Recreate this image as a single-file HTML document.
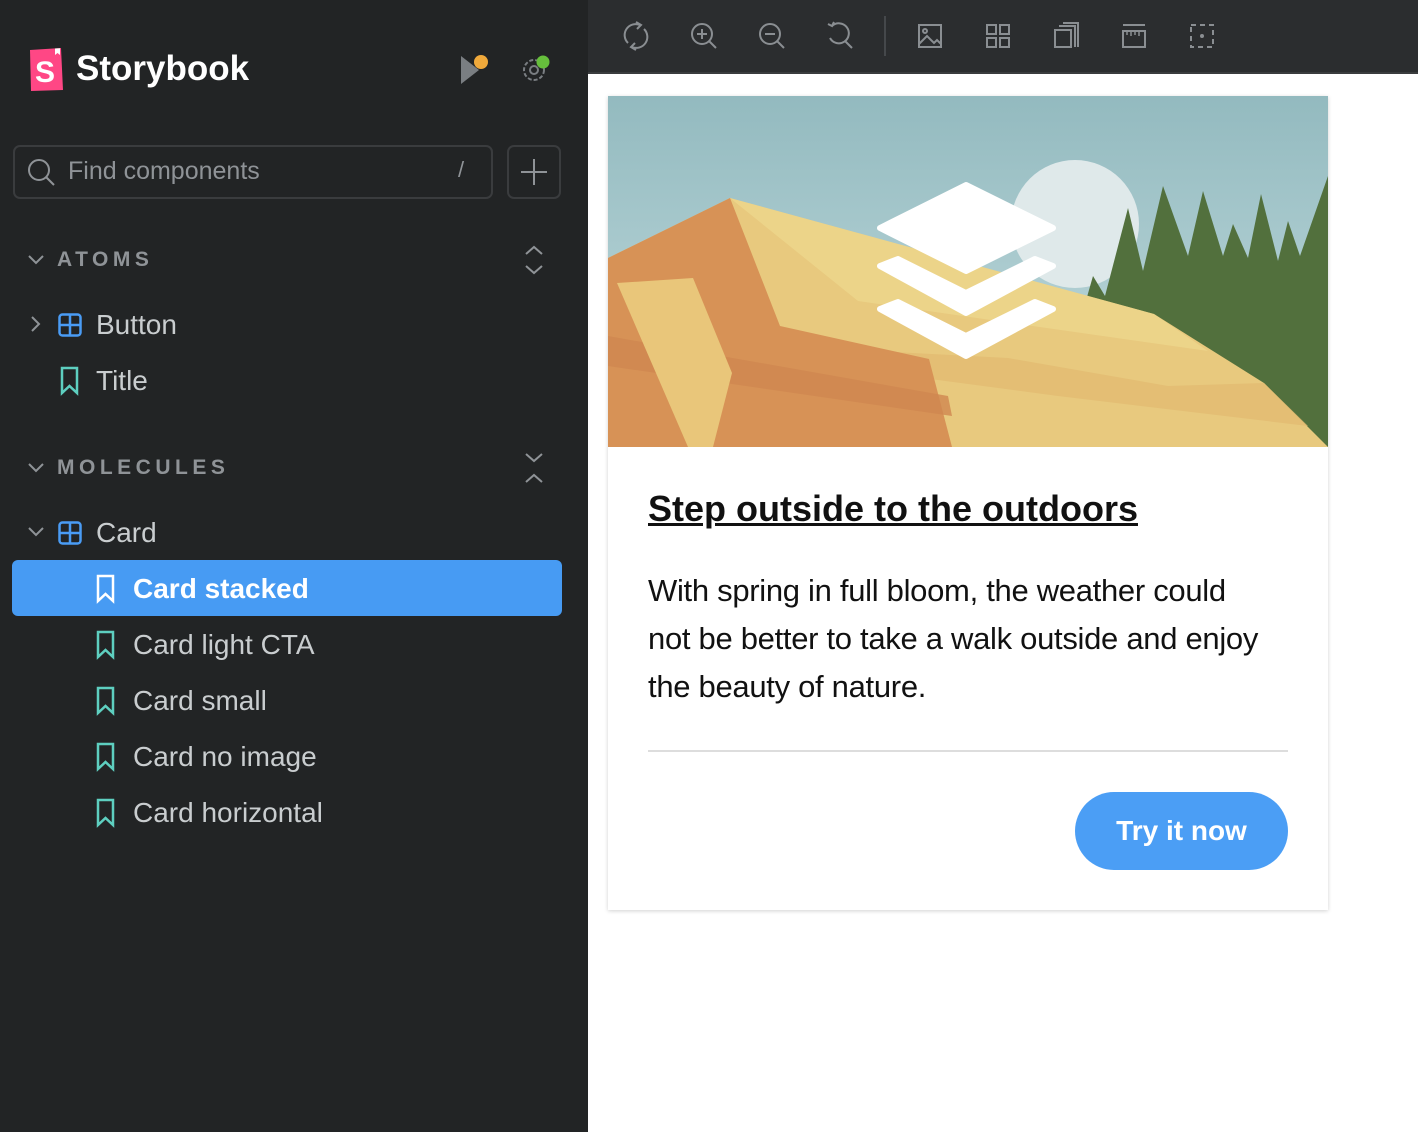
<!DOCTYPE html>
<html><head><meta charset="utf-8"><style>
*{margin:0;padding:0;box-sizing:border-box}
body{width:1418px;height:1132px;overflow:hidden;background:#fff;font-family:"Liberation Sans",sans-serif;position:relative}
#sb{position:absolute;left:0;top:0;width:588px;height:1132px;background:#222425}
.abs{position:absolute}
.t{position:absolute;color:#c9cdcf;font-size:28px;white-space:nowrap}
.sec{position:absolute;color:#8f9397;font-size:21px;font-weight:bold;letter-spacing:4.5px}
#tb{position:absolute;left:588px;top:0;width:830px;height:74px;background:#2b2d2f;border-bottom:2px solid #3a3c3e}
</style></head><body>
<div id="sb">
  <svg class="abs" style="left:28px;top:47px" width="36" height="45" viewBox="0 0 36 45"><path d="M2 3 L33 1 L35 43 L3 44 Z" fill="#ff4785"/><path d="M27 1.5 L27 8 L29.5 6 L32 8 L32 1.2Z" fill="#fff"/><text x="7" y="35" font-family="Liberation Sans" font-weight="bold" font-size="30" fill="#fff">S</text></svg>
  <div class="abs" style="left:76px;top:49px;color:#fff;font-size:35px;font-weight:bold">Storybook</div>
  <svg class="abs" style="left:455px;top:50px" width="40" height="36"><path d="M6 6 L24 20 L6 34Z" fill="#7a7e82"/><circle cx="26" cy="12" r="7" fill="#f0a93b"/></svg>
  <svg class="abs" style="left:515px;top:50px" width="40" height="36"><circle cx="19" cy="20" r="10" fill="none" stroke="#7a7e82" stroke-width="2" stroke-dasharray="4 2"/><circle cx="19" cy="20" r="4" fill="none" stroke="#7a7e82" stroke-width="2"/><circle cx="28" cy="12" r="6.5" fill="#66bf3c"/></svg>
  <div class="abs" style="left:13px;top:145px;width:480px;height:54px;border:2px solid #3a3c3e;border-radius:7px"></div>
  <svg class="abs" style="left:26px;top:157px" width="30" height="30"><circle cx="13" cy="13" r="10" fill="none" stroke="#8f9397" stroke-width="2"/><path d="M20 20 L28 28" stroke="#8f9397" stroke-width="2"/></svg>
  <div class="t" style="left:68px;top:157px;color:#8f9397;font-size:25px">Find components</div>
  <div class="t" style="left:458px;top:157px;color:#8f9397;font-size:22px">/</div>
  <div class="abs" style="left:507px;top:145px;width:54px;height:54px;border:2px solid #3a3c3e;border-radius:7px"></div>
  <svg class="abs" style="left:519px;top:157px" width="30" height="30"><path d="M15 2V28M2 15H28" stroke="#8f9397" stroke-width="2"/></svg>

  <svg class="abs" style="left:26px;top:250px" width="20" height="20"><path d="M3 6 L10 13 L17 6" fill="none" stroke="#8f9397" stroke-width="2"/></svg>
  <div class="sec" style="left:57px;top:248px">ATOMS</div>
  <svg class="abs" style="left:522px;top:244px" width="24" height="32"><path d="M4 10 L12 3 L20 10M4 22 L12 29 L20 22" fill="none" stroke="#8f9397" stroke-width="2"/></svg>

  <svg class="abs" style="left:28px;top:314px" width="16" height="20"><path d="M4 3 L11 10 L4 17" fill="none" stroke="#8f9397" stroke-width="2"/></svg>
  <svg class="abs" style="left:58px;top:313px" width="24" height="24"><rect x="1.5" y="1.5" width="21" height="21" rx="3" fill="none" stroke="#4a9cf5" stroke-width="2.5"/><path d="M12 2V22M2 12H22" stroke="#4a9cf5" stroke-width="2.5"/></svg>
  <div class="t" style="left:96px;top:309px">Button</div>
  <svg class="abs" style="left:60px;top:366px" width="20" height="30"><path d="M2 2H17V27L9.5 20L2 27Z" fill="none" stroke="#5ecfc0" stroke-width="2.5"/></svg>
  <div class="t" style="left:96px;top:365px">Title</div>

  <svg class="abs" style="left:26px;top:458px" width="20" height="20"><path d="M3 6 L10 13 L17 6" fill="none" stroke="#8f9397" stroke-width="2"/></svg>
  <div class="sec" style="left:57px;top:456px">MOLECULES</div>
  <svg class="abs" style="left:522px;top:452px" width="24" height="32"><path d="M4 2 L12 9 L20 2M4 30 L12 23 L20 30" fill="none" stroke="#8f9397" stroke-width="2"/></svg>

  <svg class="abs" style="left:26px;top:522px" width="20" height="20"><path d="M3 6 L10 13 L17 6" fill="none" stroke="#8f9397" stroke-width="2"/></svg>
  <svg class="abs" style="left:58px;top:521px" width="24" height="24"><rect x="1.5" y="1.5" width="21" height="21" rx="3" fill="none" stroke="#4a9cf5" stroke-width="2.5"/><path d="M12 2V22M2 12H22" stroke="#4a9cf5" stroke-width="2.5"/></svg>
  <div class="t" style="left:96px;top:517px">Card</div>

  <div class="abs" style="left:12px;top:560px;width:550px;height:56px;background:#479bf3;border-radius:6px"></div>
  <svg class="abs" style="left:96px;top:574px" width="20" height="30"><path d="M2 2H17V27L9.5 20L2 27Z" fill="none" stroke="#fff" stroke-width="2.5"/></svg>
  <div class="t" style="left:133px;top:573px;color:#fff;font-weight:bold">Card stacked</div>

  <svg class="abs" style="left:96px;top:630px" width="20" height="30"><path d="M2 2H17V27L9.5 20L2 27Z" fill="none" stroke="#5ecfc0" stroke-width="2.5"/></svg>
  <div class="t" style="left:133px;top:629px">Card light CTA</div>
  <svg class="abs" style="left:96px;top:686px" width="20" height="30"><path d="M2 2H17V27L9.5 20L2 27Z" fill="none" stroke="#5ecfc0" stroke-width="2.5"/></svg>
  <div class="t" style="left:133px;top:685px">Card small</div>
  <svg class="abs" style="left:96px;top:742px" width="20" height="30"><path d="M2 2H17V27L9.5 20L2 27Z" fill="none" stroke="#5ecfc0" stroke-width="2.5"/></svg>
  <div class="t" style="left:133px;top:741px">Card no image</div>
  <svg class="abs" style="left:96px;top:798px" width="20" height="30"><path d="M2 2H17V27L9.5 20L2 27Z" fill="none" stroke="#5ecfc0" stroke-width="2.5"/></svg>
  <div class="t" style="left:133px;top:797px">Card horizontal</div>
</div>

<div id="tb">
<svg width="830" height="74" fill="none" stroke="#8a8e92" stroke-width="2">
 <g transform="translate(48,36)"><path d="M-8 7 A11 11 0 0 1 4 -11M8 -7 A11 11 0 0 1 -4 11"/><path d="M0 -14 L5 -11 L1 -7M0 14 L-5 11 L-1 7"/></g>
 <g transform="translate(114,34)"><circle r="10"/><path d="M7 7 L14 14M-5 0H5M0 -5V5"/></g>
 <g transform="translate(182,34)"><circle r="10"/><path d="M7 7 L14 14M-5 0H5"/></g>
 <g transform="translate(250,34)"><path d="M-6 -8 A10 10 0 1 1 -8 4"/><path d="M-10 -10 L-6 -8 L-4 -12"/><path d="M7 7 L14 14"/></g>
 <path d="M297 16V56" stroke="#45484b"/>
 <g transform="translate(342,36)"><rect x="-11" y="-11" width="22" height="22"/><path d="M-11 8 L-3 0 L4 7 L7 4 L11 8"/><circle cx="-5" cy="-5" r="2"/></g>
 <g transform="translate(410,36)"><rect x="-11" y="-11" width="9" height="9"/><rect x="2" y="-11" width="9" height="9"/><rect x="-11" y="2" width="9" height="9"/><rect x="2" y="2" width="9" height="9"/></g>
 <g transform="translate(478,36)"><rect x="-11" y="-6" width="16" height="17"/><path d="M-7 -10H9V11M-3 -13H12V11"/></g>
 <g transform="translate(546,36)"><path d="M-11 -11H11M-11 -5H11V11H-11Z"/><path d="M-7 -5V-1M-3 -5V0M1 -5V-1M5 -5V0" stroke-width="1.5"/></g>
 <g transform="translate(614,36)"><rect x="-11" y="-11" width="22" height="22" stroke-dasharray="5 4"/><circle r="1" fill="#8a8e92"/></g>
</svg>
</div>

<div class="abs" style="left:608px;top:96px;width:720px;height:814px;background:#fff;box-shadow:0 1px 4px rgba(0,0,0,0.18)">
<svg width="720" height="351" viewBox="0 0 720 351" style="display:block">
 <defs><linearGradient id="sky" x1="0" y1="0" x2="0" y2="1"><stop offset="0" stop-color="#93babf"/><stop offset="1" stop-color="#c4dde0"/></linearGradient></defs>
 <rect width="720" height="351" fill="url(#sky)"/>
 <circle cx="467" cy="128" r="64" fill="#dfe9ea"/>
 <path d="M430 351 L475 215 L485 180 L497 200 L520 112 L535 175 L555 90 L580 160 L595 95 L615 160 L625 128 L640 162 L653 98 L670 165 L680 125 L692 160 L720 80 L720 351Z" fill="#52703d"/>
 <path d="M0 162 L122 102 L546 218 L656 287 L720 351 L0 351Z" fill="#e8c97e"/>
 <path d="M122 102 L546 218 L600 255 L250 205 Z" fill="#eed88e" opacity=".7"/>
 <path d="M170 250 L400 262 L560 290 L656 287 L700 330 L450 300 L300 280Z" fill="#e2bc72" opacity=".8"/>
 <path d="M0 162 L122 102 L172 230 L321 263 L344 351 L0 351Z" fill="#d79256"/>
 <path d="M0 240 L340 300 L344 320 L0 270Z" fill="#cf8750" opacity=".8"/>
 <path d="M9 187 L85 182 L124 277 L105 351 L80 351Z" fill="#e9c67a"/>
 <g fill="#fff">
  <path d="M272 132 L358 89 L445 132 L358 175Z" stroke="#fff" stroke-width="6" stroke-linejoin="round"/>
  <path d="M272 170 L290 163 L358 197 L427 163 L445 170 L358 217Z" stroke="#fff" stroke-width="6" stroke-linejoin="round"/>
  <path d="M272 213 L290 206 L358 240 L427 206 L445 213 L358 260Z" stroke="#fff" stroke-width="6" stroke-linejoin="round"/>
 </g>
</svg>
<div class="abs" style="left:40px;top:392px;font-size:36px;font-weight:bold;text-decoration:underline;color:#111">Step outside to the outdoors</div>
<div class="abs" style="left:40px;top:471px;width:680px;font-size:31px;line-height:48px;color:#111;letter-spacing:-0.3px;white-space:nowrap">With spring in full bloom, the weather could<br>not be better to take a walk outside and enjoy<br>the beauty of nature.</div>
<div class="abs" style="left:40px;top:654px;width:640px;height:2px;background:#ddd"></div>
<div class="abs" style="left:467px;top:696px;width:213px;height:78px;border-radius:39px;background:#4b9ef5;color:#fff;font-size:28px;font-weight:bold;text-align:center;line-height:78px">Try it now</div>
</div>
</body></html>
